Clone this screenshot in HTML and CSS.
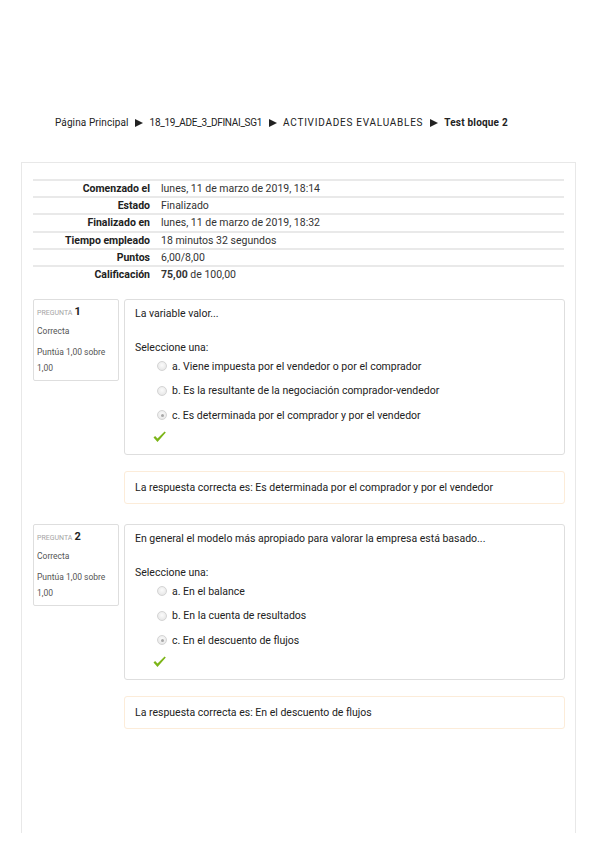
FILE: index.html
```html
<!DOCTYPE html>
<html lang="es">
<head>
<meta charset="utf-8">
<title>Test bloque 2</title>
<link rel="stylesheet" href="styles.css">
</head>
<body>
<nav class="crumbs">
  <span class="c1">Página Principal</span><svg class="sep" width="8" height="8" viewBox="0 0 8 8"><path d="M0 0 L8 4 L0 8 Z" fill="#222"/></svg><span class="c2">18_19_ADE_3_DFINAI_SG1</span><svg class="sep" width="8" height="8" viewBox="0 0 8 8"><path d="M0 0 L8 4 L0 8 Z" fill="#222"/></svg><span class="c3">ACTIVIDADES EVALUABLES</span><svg class="sep" width="8" height="8" viewBox="0 0 8 8"><path d="M0 0 L8 4 L0 8 Z" fill="#222"/></svg><b class="c4">Test bloque 2</b>
</nav>
<main class="card">
  <table class="summary">
    <tr><th>Comenzado el</th><td>lunes, 11 de marzo de 2019, 18:14</td></tr>
    <tr><th>Estado</th><td>Finalizado</td></tr>
    <tr><th>Finalizado en</th><td>lunes, 11 de marzo de 2019, 18:32</td></tr>
    <tr><th>Tiempo empleado</th><td>18 minutos 32 segundos</td></tr>
    <tr><th>Puntos</th><td>6,00/8,00</td></tr>
    <tr><th>Calificación</th><td><b>75,00</b> de 100,00</td></tr>
  </table>

  <section class="que">
    <div class="info">
      <div class="qno"><span class="qlabel">Pregunta</span> <b>1</b></div>
      <div class="state">Correcta</div>
      <div class="grade">Puntúa 1,00 sobre 1,00</div>
    </div>
    <div class="body">
      <div class="formulation">
        <p class="qtext">La variable valor...</p>
        <p class="prompt">Seleccione una:</p>
        <div class="answer">
          <div class="opt"><span class="radio"></span>a. Viene impuesta por el vendedor o por el comprador</div>
          <div class="opt"><span class="radio"></span>b. Es la resultante de la negociación comprador-vendedor</div>
          <div class="opt"><span class="radio checked"></span>c. Es determinada por el comprador y por el vendedor</div>
        </div>
        <svg class="tick" width="13" height="12" viewBox="0 0 13 12"><path d="M0.5 6.6 L4.5 11 L12.8 1.4 L11.6 0.4 L4.5 7.6 L2.1 5.1 Z" fill="#7cb518"/></svg>
      </div>
      <div class="outcome">La respuesta correcta es: Es determinada por el comprador y por el vendedor</div>
    </div>
  </section>

  <section class="que">
    <div class="info">
      <div class="qno"><span class="qlabel">Pregunta</span> <b>2</b></div>
      <div class="state">Correcta</div>
      <div class="grade">Puntúa 1,00 sobre 1,00</div>
    </div>
    <div class="body">
      <div class="formulation">
        <p class="qtext">En general el modelo más apropiado para valorar la empresa está basado...</p>
        <p class="prompt">Seleccione una:</p>
        <div class="answer">
          <div class="opt"><span class="radio"></span>a. En el balance</div>
          <div class="opt"><span class="radio"></span>b. En la cuenta de resultados</div>
          <div class="opt"><span class="radio checked"></span>c. En el descuento de flujos</div>
        </div>
        <svg class="tick" width="13" height="12" viewBox="0 0 13 12"><path d="M0.5 6.6 L4.5 11 L12.8 1.4 L11.6 0.4 L4.5 7.6 L2.1 5.1 Z" fill="#7cb518"/></svg>
      </div>
      <div class="outcome">La respuesta correcta es: En el descuento de flujos</div>
    </div>
  </section>
</main>
</body>
</html>
```
FILE: styles.css
```css
html, body {
  margin: 0;
  padding: 0;
  background: #fff;
}
body {
  font-family: Roboto, "Liberation Sans", sans-serif;
  font-size: 10.5px;
  color: #222;
  height: 848px;
  overflow: hidden;
}
.crumbs {
  display: flex;
  align-items: center;
  padding: 116px 0 0 55px;
  height: 14px;
  line-height: 14px;
  font-size: 10px;
  letter-spacing: -0.2px;
  color: #222;
  white-space: nowrap;
}
.crumbs .sep {
  margin: 0 6.5px;
  flex: none;
}
.crumbs .c1 {
  letter-spacing: 0.1px;
}
.crumbs .c2 {
  letter-spacing: -0.3px;
}
.crumbs .c3 {
  letter-spacing: 0.75px;
}
.crumbs .c4 {
  font-weight: 700;
  letter-spacing: 0.2px;
}
.card {
  margin: 32px 0 0 21px;
  width: 555px;
  height: 671px;
  border: 1px solid #e8e8e8;
  border-bottom: none;
  box-sizing: border-box;
  padding: 16px 12px 0 11px;
}
.summary {
  width: 531px;
  border-collapse: collapse;
}
.summary tr {
  border-top: 2px solid #e9e9e9;
}
.summary th, .summary td {
  height: 15.2px;
  padding: 0;
  line-height: 15.2px;
  vertical-align: middle;
}
.summary th {
  width: 117px;
  text-align: right;
  font-weight: 700;
  padding-right: 11px;
  white-space: nowrap;
}
.summary td {
  text-align: left;
  color: #333;
}
.que {
  display: flex;
  gap: 5px;
  margin-top: 17px;
  width: 532px;
}
.que + .que {
  margin-top: 20px;
}
.info {
  width: 86px;
  height: 82px;
  box-sizing: border-box;
  border: 1px solid #dedede;
  border-radius: 2px;
  padding: 5px 3px 0 3px;
  font-size: 8.5px;
  color: #555;
}
.qno {
  height: 14px;
  line-height: 14px;
}
.qlabel {
  text-transform: uppercase;
  color: #a5a5a5;
  font-size: 7px;
}
.qno b {
  font-size: 11px;
  color: #222;
}
.state {
  margin-top: 6px;
  line-height: 12px;
}
.grade {
  margin-top: 7px;
  line-height: 16px;
  width: 80px;
}
.body {
  flex: 1;
  display: flex;
  flex-direction: column;
}
.formulation {
  height: 156px;
  box-sizing: border-box;
  border: 1px solid #dedede;
  border-radius: 3px;
  padding: 7px 10px 0 10px;
}
.qtext, .prompt {
  margin: 0;
  line-height: 14px;
}
.prompt {
  margin-top: 20px;
}
.answer {
  padding-left: 23px;
  margin-top: -1px;
}
.opt {
  display: flex;
  align-items: center;
  height: 24.4px;
  color: #222;
}
.radio {
  width: 10px;
  height: 10px;
  border-radius: 50%;
  box-sizing: border-box;
  border: 1px solid #d4d4d4;
  background: radial-gradient(circle at 50% 40%, #fbfbfb, #e2e2e2);
  margin-right: 5px;
  margin-left: -1px;
  position: relative;
}
.radio.checked::after {
  content: "";
  position: absolute;
  left: 2.5px;
  top: 2.5px;
  width: 3px;
  height: 3px;
  border-radius: 50%;
  background: #a8a8a8;
}
.tick {
  display: block;
  margin: 4px 0 0 18px;
}
.outcome {
  margin-top: 16px;
  height: 33px;
  box-sizing: border-box;
  border: 1px solid #fcecd9;
  border-radius: 3px;
  padding: 0 10px;
  line-height: 31px;
  color: #222;
}
```
